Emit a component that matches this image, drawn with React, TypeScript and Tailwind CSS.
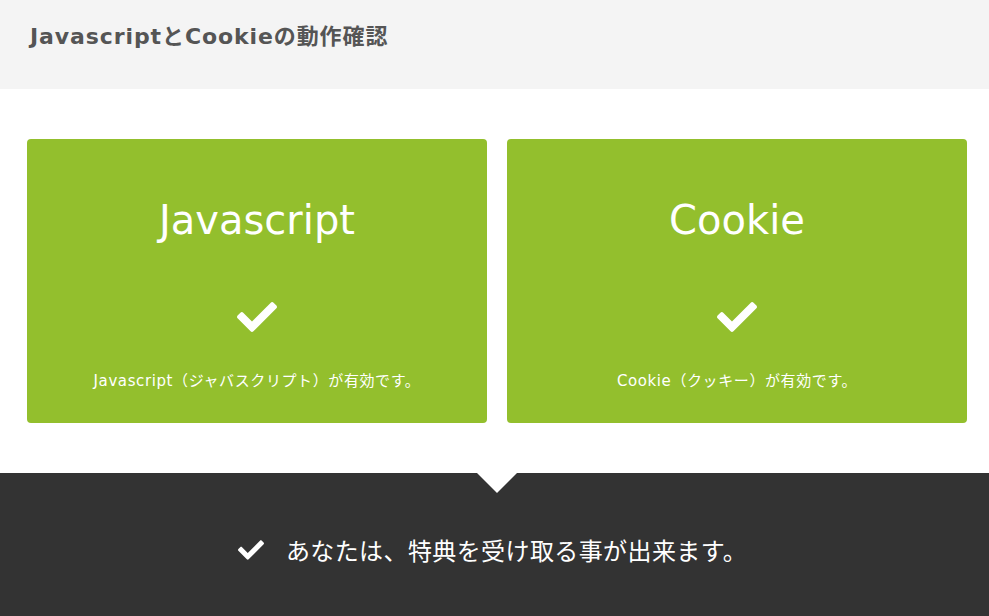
import { FaCheck } from "react-icons/fa";

const font = {
  fontFamily:
    '"DejaVu Sans", "Noto Sans CJK JP", sans-serif',
};

function StatusCard({ title, message }: { title: string; message: string }) {
  return (
    <div className="flex h-[284px] w-[460px] shrink-0 flex-col items-center rounded-[4px] bg-[#93bf2d] text-white">
      <h2 className="mt-[61px] text-[40px] leading-none font-normal">{title}</h2>
      <FaCheck className="mt-[57px] h-[40px] w-[40px]" />
      <p className="mt-[37px] text-[15px] leading-none tracking-[0.6px]">{message}</p>
    </div>
  );
}

export default function App() {
  return (
    <div className="h-[616px] w-[989px] overflow-hidden bg-white" style={font}>
      <header className="flex h-[89px] items-start bg-[#f4f4f4] px-[30px] pt-[26px]">
        <h1 className="text-[22px] font-bold leading-none tracking-[0.9px] text-[#555555]">
          JavascriptとCookieの動作確認
        </h1>
      </header>

      <section className="flex gap-[20px] pl-[27px] pr-[22px] pt-[50px] pb-[50px]">
        <StatusCard title="Javascript" message="Javascript（ジャバスクリプト）が有効です。" />
        <StatusCard title="Cookie" message="Cookie（クッキー）が有効です。" />
      </section>

      <section className="relative h-[143px] bg-[#333333]">
        <div className="absolute left-[477px] top-0 h-0 w-0 border-x-[20px] border-t-[20px] border-x-transparent border-t-white" />
        <div className="flex items-center justify-center gap-[22px] pt-[64px] pr-[4px] text-white">
          <FaCheck className="h-[26px] w-[26px]" />
          <span
            className="text-[24px] leading-none tracking-[0.4px]"
            style={{ fontFamily: '"Noto Sans CJK JP", sans-serif' }}
          >
            あなたは、特典を受け取る事が出来ます。
          </span>
        </div>
      </section>
    </div>
  );
}
